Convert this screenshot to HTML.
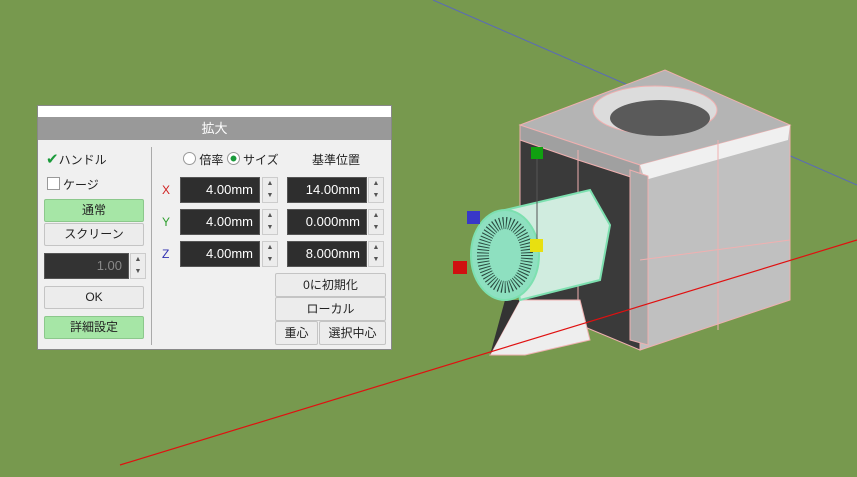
<!DOCTYPE html>
<html><head><meta charset="utf-8"><style>
body{margin:0;width:857px;height:477px;overflow:hidden;background:#77994e;font-family:"Liberation Sans","Noto Sans CJK JP",sans-serif;font-size:12px;color:#222;position:relative}
svg{position:absolute;left:0;top:0}
.dlg{position:absolute;left:37px;top:105px;width:355px;height:245px;background:#f0f0f0;border:1px solid #888;box-sizing:border-box}
.ab{position:absolute;box-sizing:border-box}
.btn{position:absolute;box-sizing:border-box;background:#ececec;border:1px solid #c4c4c4;border-radius:2px;text-align:center;font-size:12px}
.g{background:#a6e6a6;border-color:#8cc88c}
.inp{position:absolute;box-sizing:border-box;background:#2e2e2e;color:#fff;text-align:right;padding-right:6px;font-size:13px;border:1px solid #555}
.sp{position:absolute;width:16px;box-sizing:border-box;background:#ececec;border:1px solid #ccc;font-size:7px;color:#555;text-align:center;line-height:12px}
.lbl{position:absolute;font-size:12px}
</style></head><body>
<svg width="857" height="477">
<line x1="433" y1="0" x2="857" y2="185" stroke="#5a6ab8" stroke-width="1"/>
<polygon points="520,125 640,165 640,350 520,300" fill="#3a3a3a" stroke="#f0b0b0"/>
<polygon points="640,165 790,125 790,300 640,350" fill="#c0c0c0" stroke="#f0b0b0"/>
<polygon points="520,125 665,70 790,125 640,165" fill="#b4b4b4" stroke="#f0b0b0"/>
<polygon points="520,125 640,165 640,180 578,160 520,140" fill="#a0a0a0" stroke="#f0b0b0"/>
<polygon points="640,165 790,125 788,140 645,180" fill="#f0f0f0"/>
<polygon points="630,170 648,176 648,345 630,340" fill="#a8a8a8" stroke="#f0b0b0"/>
<line x1="578" y1="150" x2="578" y2="325" stroke="#f0b0b0"/>
<ellipse cx="655" cy="110" rx="62" ry="24" fill="#dcdcdc" stroke="#f0b0b0"/>
<ellipse cx="660" cy="118" rx="50" ry="18" fill="#5a5a5a"/>
<line x1="718" y1="140" x2="718" y2="330" stroke="#f0b0b0"/>
<line x1="640" y1="260" x2="790" y2="240" stroke="#f0b0b0"/>
<polygon points="490,355 520,300 580,300 590,340 525,355" fill="#eeeeee" stroke="#f0b0b0"/>
<polygon points="490,355 520,300 505,300" fill="#333"/>
<polygon points="505,210 590,190 610,225 600,280 520,300" fill="#d0ecdf" stroke="#7de0b0" stroke-width="2"/>
<ellipse cx="505" cy="255" rx="34" ry="45" fill="#8ee0c0" stroke="#7de0b0" stroke-width="2"/>
<ellipse cx="505" cy="255" rx="22" ry="32" fill="#8ee0c0" stroke="#2a4a40" stroke-dasharray="1 2" stroke-width="12"/>
<line x1="537" y1="158" x2="537" y2="245" stroke="#555"/>
<line x1="120" y1="465" x2="857" y2="240" stroke="#e01010" stroke-width="1.2"/>
<rect x="531" y="147" width="12" height="12" fill="#10a010"/>
<rect x="467" y="211" width="13" height="13" fill="#3838c8"/>
<rect x="530" y="239" width="13" height="13" fill="#e8e010"/>
<rect x="453" y="261" width="14" height="13" fill="#d01010"/>
</svg>
<div class="dlg">
<div class="ab" style="left:0;top:0;width:353px;height:11px;background:#fff"></div>
<div class="ab" style="left:0;top:11px;width:353px;height:23px;background:#999;color:#fff;text-align:center;line-height:23px;font-size:13px">拡大</div>
<div class="ab" style="left:113px;top:41px;width:1px;height:198px;background:#aaa"></div>
<div class="lbl" style="left:8px;top:44px"><span style="color:#1a9a3a;font-size:15px">✔</span>ハンドル</div>
<div class="lbl" style="left:9px;top:70px"><span style="display:inline-block;width:11px;height:11px;border:1px solid #999;background:#fff;vertical-align:-1px;margin-right:3px"></span>ケージ</div>
<div class="btn g" style="left:6px;top:93px;width:100px;height:23px;line-height:21px">通常</div>
<div class="btn" style="left:6px;top:117px;width:100px;height:23px;line-height:21px">スクリーン</div>
<div class="inp" style="left:6px;top:147px;width:85px;height:26px;line-height:24px;color:#888;background:#333">1.00</div>
<div class="sp" style="left:92px;top:147px;height:26px">▲<br>▼</div>
<div class="btn" style="left:6px;top:180px;width:100px;height:23px;line-height:21px">OK</div>
<div class="btn g" style="left:6px;top:210px;width:100px;height:23px;line-height:21px">詳細設定</div>
<div class="lbl" style="left:145px;top:45px"><span style="display:inline-block;width:11px;height:11px;border:1px solid #999;border-radius:50%;background:#fff;vertical-align:-1px"></span> 倍率 <span style="display:inline-block;width:11px;height:11px;border:1px solid #999;border-radius:50%;background:radial-gradient(#1a9a3a 35%,#fff 40%);vertical-align:-1px"></span> サイズ</div>
<div class="lbl" style="left:274px;top:45px">基準位置</div>
<div class="lbl" style="left:124px;top:77px;color:#d02020">X</div>
<div class="lbl" style="left:124px;top:109px;color:#30a030">Y</div>
<div class="lbl" style="left:124px;top:141px;color:#3030b0">Z</div>
<div class="inp" style="left:142px;top:71px;width:80px;height:26px;line-height:24px">4.00mm</div>
<div class="sp" style="left:224px;top:71px;height:26px">▲<br>▼</div>
<div class="inp" style="left:249px;top:71px;width:80px;height:26px;line-height:24px">14.00mm</div>
<div class="sp" style="left:330px;top:71px;height:26px">▲<br>▼</div>
<div class="inp" style="left:142px;top:103px;width:80px;height:26px;line-height:24px">4.00mm</div>
<div class="sp" style="left:224px;top:103px;height:26px">▲<br>▼</div>
<div class="inp" style="left:249px;top:103px;width:80px;height:26px;line-height:24px">0.000mm</div>
<div class="sp" style="left:330px;top:103px;height:26px">▲<br>▼</div>
<div class="inp" style="left:142px;top:135px;width:80px;height:26px;line-height:24px">4.00mm</div>
<div class="sp" style="left:224px;top:135px;height:26px">▲<br>▼</div>
<div class="inp" style="left:249px;top:135px;width:80px;height:26px;line-height:24px">8.000mm</div>
<div class="sp" style="left:330px;top:135px;height:26px">▲<br>▼</div>
<div class="btn" style="left:237px;top:167px;width:111px;height:24px;line-height:22px">0に初期化</div>
<div class="btn" style="left:237px;top:191px;width:111px;height:24px;line-height:22px">ローカル</div>
<div class="btn" style="left:237px;top:215px;width:43px;height:24px;line-height:22px">重心</div>
<div class="btn" style="left:281px;top:215px;width:67px;height:24px;line-height:22px">選択中心</div>
</div>
</body></html>
